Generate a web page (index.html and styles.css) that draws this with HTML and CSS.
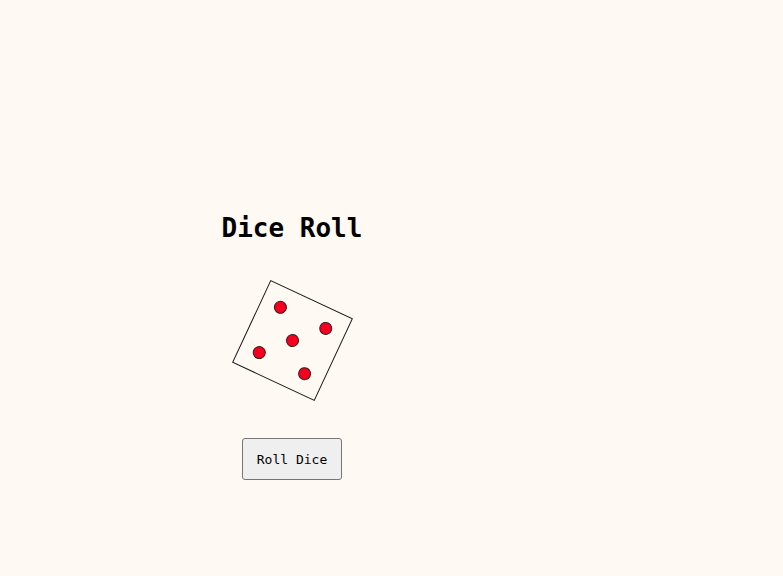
FILE: index.html
```html
<!DOCTYPE html>
<html lang="en">
<head>
<meta charset="utf-8">
<title>Dice Roll</title>
<link rel="stylesheet" href="styles.css">
</head>
<body>
<main class="app">
  <h1 class="title">Dice Roll</h1>
  <div class="die" aria-label="Die showing 5">
    <span class="pip p1"></span>
    <span class="pip p3"></span>
    <span class="pip p5"></span>
    <span class="pip p7"></span>
    <span class="pip p9"></span>
  </div>
  <button class="roll" type="button">Roll Dice</button>
</main>
</body>
</html>
```
FILE: styles.css
```css
html, body {
  margin: 0;
  padding: 0;
  background: #fef9f2;
}
body {
  font-family: "DejaVu Sans Mono", monospace;
  font-size: 13px;
  color: #000;
}
.app {
  width: 584px;
  padding-top: 213px;
  display: flex;
  flex-direction: column;
  align-items: center;
}
.title {
  margin: 0;
  font-size: 26px;
  font-weight: bold;
  line-height: 30px;
}
.die {
  margin-top: 52px;
  width: 91px;
  height: 91px;
  box-sizing: border-box;
  border: 1px solid #1a1a1a;
  padding: 7px;
  display: grid;
  grid-template-columns: repeat(3, 1fr);
  grid-template-rows: repeat(3, 1fr);
  place-items: center;
  transform: rotate(25deg);
}
.pip {
  width: 13px;
  height: 13px;
  box-sizing: border-box;
  border-radius: 50%;
  background: #f5001e;
  border: 1px solid #3a1a1a;
}
.p1 { grid-area: 1 / 1; }
.p3 { grid-area: 1 / 3; }
.p5 { grid-area: 2 / 2; }
.p7 { grid-area: 3 / 1; }
.p9 { grid-area: 3 / 3; }
.roll {
  margin-top: 52px;
  font-family: "DejaVu Sans Mono", monospace;
  font-size: 13px;
  padding: 12px 13px;
  width: 100px;
  height: 42px;
  box-sizing: border-box;
  background: #efefef;
  border: 1px solid #767676;
  border-radius: 3px;
  color: #000;
}
```
